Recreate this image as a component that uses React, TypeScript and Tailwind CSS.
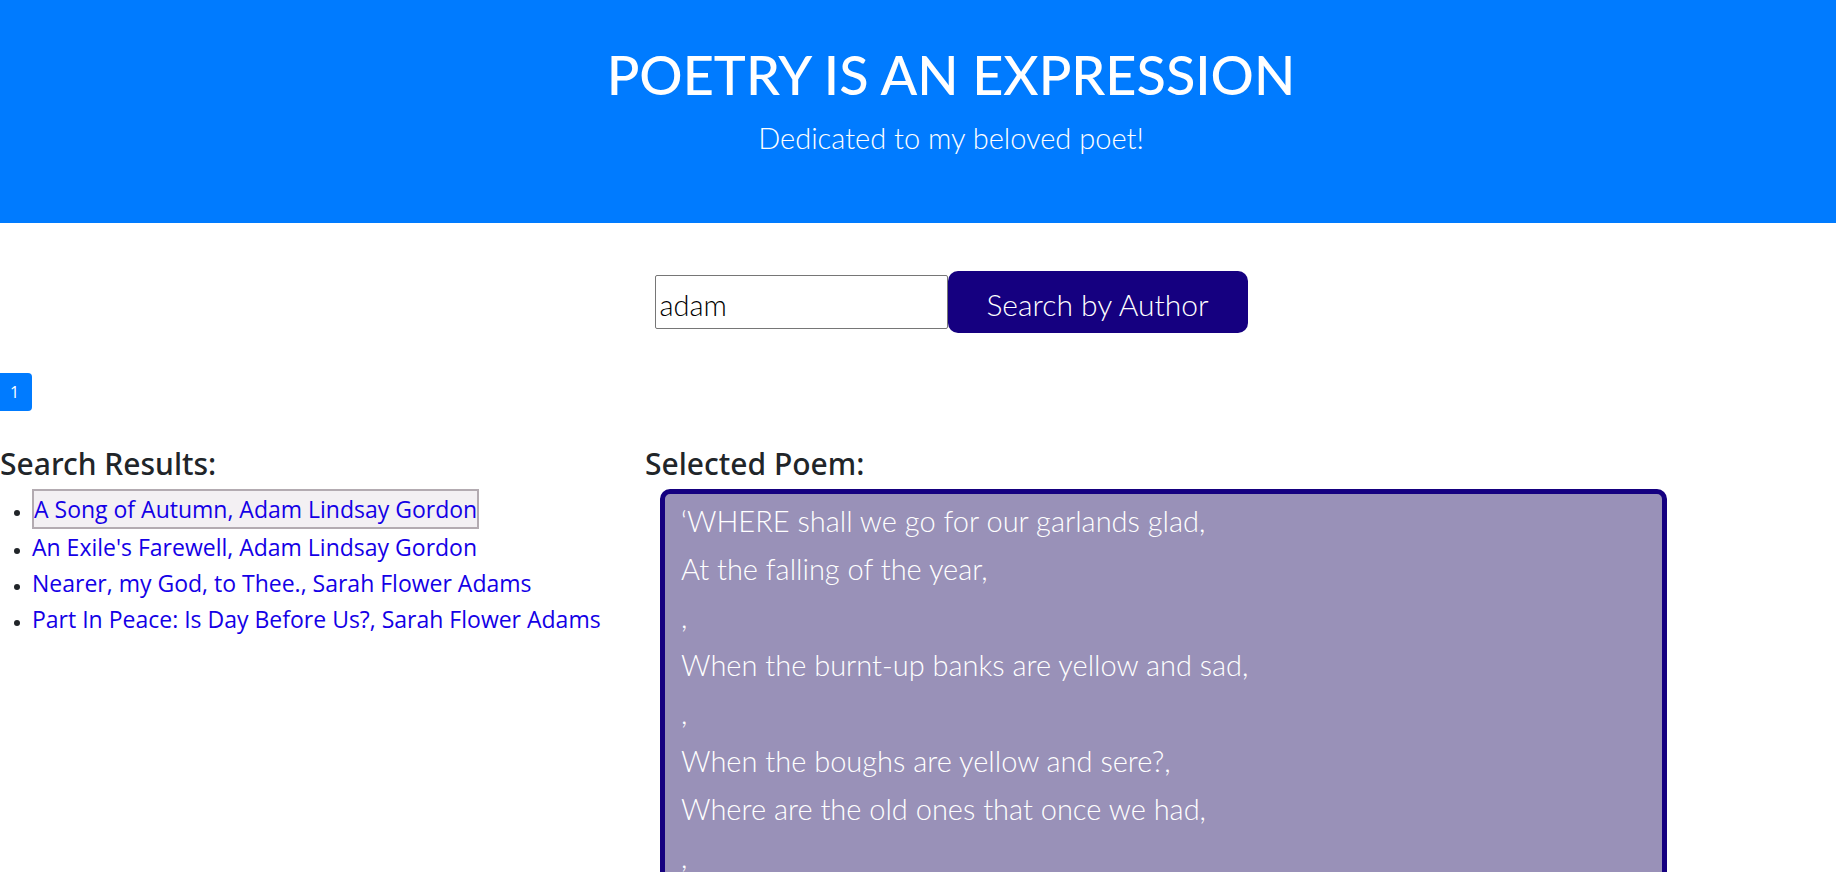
import { useState } from "react";

const poems = [
  "A Song of Autumn, Adam Lindsay Gordon",
  "An Exile's Farewell, Adam Lindsay Gordon",
  "Nearer, my God, to Thee., Sarah Flower Adams",
  "Part In Peace: Is Day Before Us?, Sarah Flower Adams",
];

const lines = [
  "‘WHERE shall we go for our garlands glad,",
  "At the falling of the year,",
  ",",
  "When the burnt-up banks are yellow and sad,",
  ",",
  "When the boughs are yellow and sere?,",
  "Where are the old ones that once we had,",
  ",",
];

export default function App() {
  const [author, setAuthor] = useState("adam");
  const [selected, setSelected] = useState(0);

  return (
    <div className="h-screen overflow-y-auto bg-white font-['Open_Sans','Noto_Sans',sans-serif] text-[#212529] [scrollbar-width:none]">
      <header className="bg-[#007bff] pt-[42px] pb-16 pl-[66px] text-center font-['Lato',sans-serif] text-white">
        <h1 className="text-[54px] leading-[66px] font-medium">POETRY IS AN EXPRESSION</h1>
        <p className="mt-2 text-[29px] leading-[43px] font-light">Dedicated to my beloved poet!</p>
      </header>

      <form
        className="mt-12 flex items-center justify-center pl-[66px] font-['Lato',sans-serif] text-[29px] font-light"
        onSubmit={(e) => e.preventDefault()}
      >
        <input
          type="text"
          aria-label="Author"
          value={author}
          onChange={(e) => setAuthor(e.target.value)}
          className="h-[54px] w-[293px] rounded-xs border border-[#767676] bg-white px-1 pt-1 text-black outline-none"
        />
        <button type="submit" className="h-[62px] w-[300px] rounded-[10px] bg-[#150080] pt-1 text-[30px] text-white">
          Search by Author
        </button>
      </form>

      <nav aria-label="Pages" className="mt-10 flex">
        <a
          href="#page-1"
          aria-current="page"
          className="flex h-[38px] w-8 items-center rounded-r bg-[#007bff] pl-2.5 text-base text-white"
        >
          1
        </a>
      </nav>

      <main className="mt-8 grid grid-cols-[645fr_1191fr]">
        <section>
          <h2 className="pt-0.5 font-['Noto_Sans',sans-serif] text-[30px] leading-[38px] font-medium">
            Search Results:
          </h2>
          <ul className="mt-1.5 list-disc pl-8 text-[23px] leading-9 marker:text-base">
            {poems.map((poem, i) => (
              <li key={poem}>
                <a
                  href={`#poem-${i + 1}`}
                  onClick={() => setSelected(i)}
                  className={
                    i === selected
                      ? "inline-block border-2 border-[#b3abb1] bg-[#f3f0f3] whitespace-nowrap text-[#1400e6]"
                      : "whitespace-nowrap text-[#1400e6]"
                  }
                >
                  {poem}
                </a>
              </li>
            ))}
          </ul>
        </section>

        <section>
          <h2 className="pt-0.5 font-['Noto_Sans',sans-serif] text-[30px] leading-[38px] font-medium">
            Selected Poem:
          </h2>
          <div className="mt-1.5 mr-[169px] ml-[15px] rounded-[10px] border-[5px] border-[#150080] bg-[#9991b8] px-4 pt-[3px] pb-1 font-['Lato',sans-serif] text-[29px] leading-[48px] font-light text-white">
            {lines.map((line, i) => (
              <p key={i}>{line}</p>
            ))}
          </div>
        </section>
      </main>
    </div>
  );
}
